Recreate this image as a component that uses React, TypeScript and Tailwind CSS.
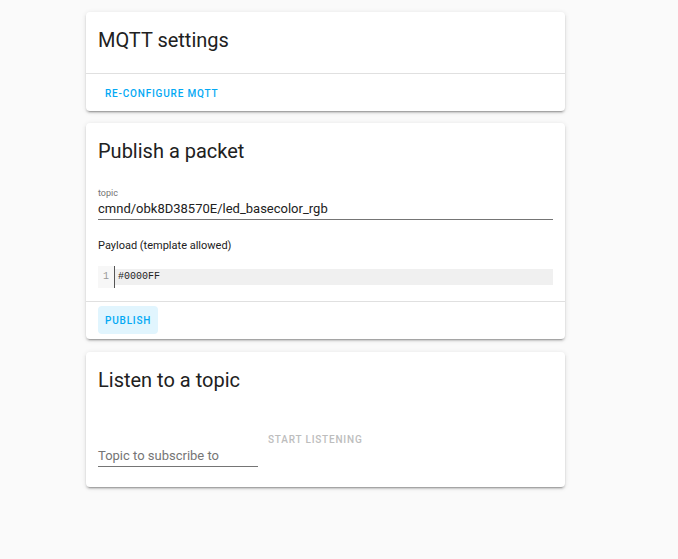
const font = { fontFamily: 'Roboto, "Liberation Sans", sans-serif' };

function Card({ title, children, className = '' }: { title: string; children: React.ReactNode; className?: string }) {
  return (
    <div className={`rounded bg-white shadow-[0_2px_2px_0_rgba(0,0,0,0.14),0_1px_5px_0_rgba(0,0,0,0.12),0_3px_1px_-2px_rgba(0,0,0,0.2)] ${className}`}>
      <div className="px-3 pt-[14px] text-[20px] leading-7 text-[#212121]">{title}</div>
      {children}
    </div>
  );
}

function TextButton({ label, tone }: { label: string; tone: 'blue' | 'filled' | 'disabled' }) {
  const cls =
    tone === 'filled'
      ? 'bg-[#e1f5fe] text-[#03a9f4]'
      : tone === 'blue'
        ? 'text-[#03a9f4]'
        : 'text-[#bdbdbd]';
  return (
    <button
      type="button"
      className={`h-7 rounded px-[7px] text-[10px] font-medium uppercase tracking-[0.8px] ${cls}`}
    >
      {label}
    </button>
  );
}

export default function App() {
  return (
    <div className="min-h-[559px] bg-[#fafafa] pt-3" style={font}>
      <div className="ml-[86px] flex w-[479px] flex-col gap-3">
        <Card title="MQTT settings">
          <div className="mt-[19px] border-t border-[#e0e0e0] px-3 pb-1 pt-[5px]">
            <TextButton label="Re-configure MQTT" tone="blue" />
          </div>
        </Card>

        <Card title="Publish a packet">
          <div className="px-3 pb-[13px]">
            <div className="mt-[22px] text-[9px] leading-3 text-[#737373]">topic</div>
            <div className="border-b border-[#757575] text-[13px] leading-5 text-[#212121]">
              cmnd/obk8D38570E/led_basecolor_rgb
            </div>
            <div className="mt-[18px] text-[11px] leading-4 text-[#212121]">Payload (template allowed)</div>
            <div className="mt-3 flex h-[22px]">
              <div className="w-[17px] border-r border-[#555] bg-[#f7f7f7] pr-[5px] pt-[3px] text-right font-['Liberation_Mono',monospace] text-[10px] leading-4 text-[#999]">
                1
              </div>
              <div className="flex-1 pt-[3px]">
                <div className="bg-[#f0f0f0] pl-[3px] font-['Liberation_Mono',monospace] text-[10px] leading-4 text-[#222]">
                  #0000FF
                </div>
              </div>
            </div>
          </div>
          <div className="border-t border-[#e0e0e0] px-3 pb-[5px] pt-1">
            <TextButton label="Publish" tone="filled" />
          </div>
        </Card>

        <Card title="Listen to a topic" className="mt-px">
          <div className="mt-[31px] flex items-start px-3 pb-5">
            <div className="mt-[21px] w-40 border-b border-[#757575] text-[13px] leading-5 text-[#757575]">
              Topic to subscribe to
            </div>
            <div className="ml-[3px]">
              <TextButton label="Start listening" tone="disabled" />
            </div>
          </div>
        </Card>
      </div>
    </div>
  );
}
